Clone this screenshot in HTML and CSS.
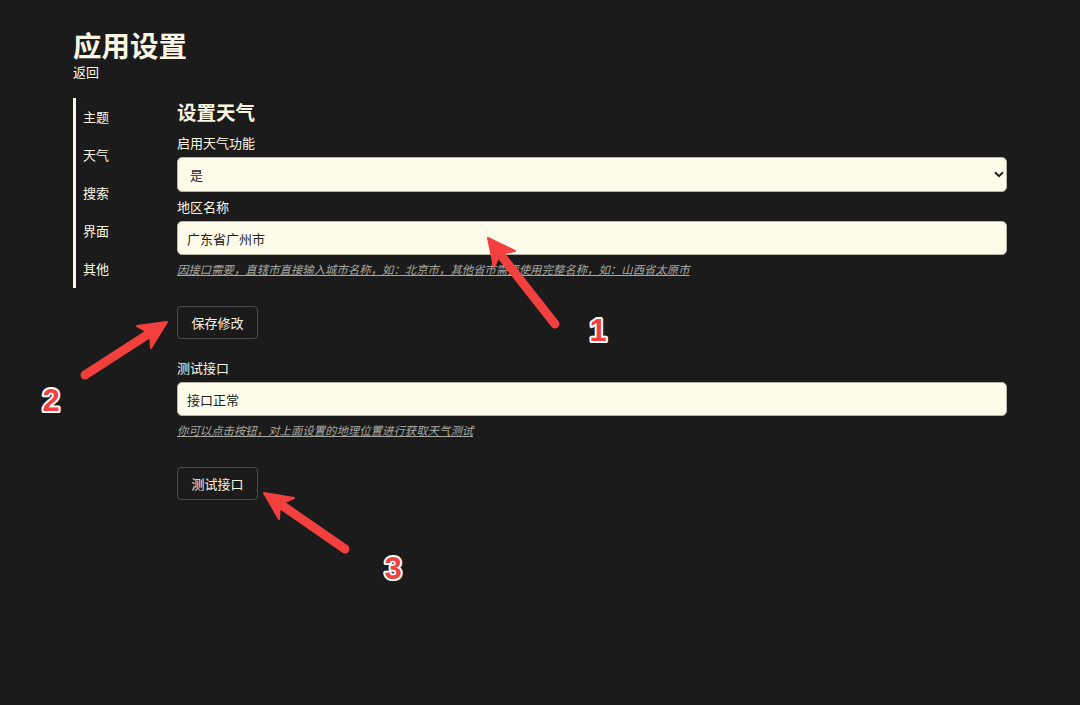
FILE: index.html
```html
<!DOCTYPE html>
<html lang="zh">
<head>
<meta charset="utf-8">
<title>应用设置</title>
<link rel="stylesheet" href="styles.css">
</head>
<body>
<div class="page">
  <header class="header">
    <h1 class="title">应用设置</h1>
    <a class="back">返回</a>
  </header>
  <div class="layout">
    <nav class="sidebar">
      <div class="nav-item">主题</div>
      <div class="nav-item">天气</div>
      <div class="nav-item">搜索</div>
      <div class="nav-item">界面</div>
      <div class="nav-item">其他</div>
    </nav>
    <main class="main">
      <h2 class="section-title">设置天气</h2>
      <label class="label">启用天气功能</label>
      <div class="select-wrap">
        <select class="field select"><option>是</option></select>
        <svg class="chevron" width="10" height="7" viewBox="0 0 10 7"><path d="M1 1.2 L5 5.2 L9 1.2" fill="none" stroke="#222" stroke-width="2"/></svg>
      </div>
      <label class="label">地区名称</label>
      <input class="field input" value="广东省广州市">
      <p class="hint">因接口需要，直辖市直接输入城市名称，如：北京市，其他省市需要使用完整名称，如：山西省太原市</p>
      <button class="btn btn-first">保存修改</button>
      <label class="label label-test">测试接口</label>
      <input class="field input" value="接口正常">
      <p class="hint">你可以点击按钮，对上面设置的地理位置进行获取天气测试</p>
      <button class="btn btn-second">测试接口</button>
    </main>
  </div>
</div>
<svg class="annotations" width="1080" height="705" viewBox="0 0 1080 705">
  <g stroke="#f2403f" stroke-width="9" stroke-linecap="round" fill="none">
    <line x1="555" y1="324" x2="500" y2="254"/>
    <line x1="85" y1="375" x2="150" y2="333"/>
    <line x1="345" y1="549" x2="280" y2="504"/>
  </g>
  <g fill="#f2403f" stroke="#f2403f" stroke-width="2" stroke-linejoin="round">
    <polygon points="488,238 515,251 500,254 494,267"/>
    <polygon points="167,322 151,348 150,333 137,326"/>
    <polygon points="264,493 294,498 280,504 279,519"/>
  </g>
  <g class="num">
    <text x="598" y="341">1</text>
    <text x="51" y="411">2</text>
    <text x="393" y="579">3</text>
  </g>
</svg>
</body>
</html>
```

FILE: styles.css
```css
* { box-sizing: border-box; }
html, body {
  margin: 0;
  padding: 0;
  background: #1b1b1b;
}
body {
  position: relative;
  width: 1080px;
  height: 705px;
  overflow: hidden;
  color: #fbf6e2;
  font-family: "Noto Sans CJK SC", "Noto Sans", sans-serif;
}
.page {
  padding: 29px 0 0 73px;
}
.header {
  display: flex;
  flex-direction: column;
}
.title {
  margin: 0;
  font-size: 28.5px;
  font-weight: 700;
  line-height: 32px;
}
.back {
  font-size: 13px;
  line-height: 18px;
  margin-top: 2px;
}
.layout {
  display: flex;
  margin-top: 17px;
}
.sidebar {
  width: 104px;
  flex: none;
  display: flex;
  flex-direction: column;
  align-self: flex-start;
  border-left: 3px solid #fbf6e2;
}
.nav-item {
  height: 38px;
  line-height: 38px;
  font-size: 13px;
  padding-left: 7px;
}
.main {
  width: 830px;
  display: flex;
  flex-direction: column;
  align-items: flex-start;
}
.section-title {
  margin: 0;
  font-size: 19.5px;
  font-weight: 700;
  line-height: 28px;
}
.label {
  font-size: 13px;
  line-height: 18px;
  margin-top: 8px;
  margin-bottom: 5px;
}
.label-test {
  margin-top: 20px;
}
.select-wrap {
  position: relative;
  width: 100%;
}
.field {
  display: block;
  width: 100%;
  background: #fefbea;
  border: 1px solid #b5b3a6;
  border-radius: 5px;
  color: #222;
  font-family: "Noto Sans CJK SC", "Noto Sans", sans-serif;
  font-size: 13px;
  outline: none;
}
.select {
  appearance: none;
  -webkit-appearance: none;
  height: 35px;
  padding: 0 12px;
}
.chevron {
  position: absolute;
  right: 3px;
  top: 14px;
}
.input {
  height: 34px;
  padding: 0 9px;
}
.select-wrap + .label {
  margin-top: 6px;
}
.hint {
  margin: 6px 0 0;
  font-size: 11.4px;
  line-height: 16px;
  font-style: italic;
  text-decoration: underline;
  color: #a8a8a2;
}
.btn {
  height: 33px;
  width: 81px;
  padding: 0;
  background: #1b1b1b;
  color: #fbf6e2;
  border: 1px solid #4d4d4d;
  border-radius: 4px;
  font-family: "Noto Sans CJK SC", "Noto Sans", sans-serif;
  font-size: 13px;
}
.btn-first {
  margin-top: 29px;
}
.btn-second {
  margin-top: 29px;
}
.annotations {
  position: absolute;
  left: 0;
  top: 0;
  pointer-events: none;
}
.num text {
  font-family: "Liberation Sans", Arial, sans-serif;
  font-weight: 700;
  font-size: 31px;
  text-anchor: middle;
  fill: #f2403f;
  stroke: #ffffff;
  stroke-width: 4px;
  stroke-linejoin: round;
  paint-order: stroke;
}
```
